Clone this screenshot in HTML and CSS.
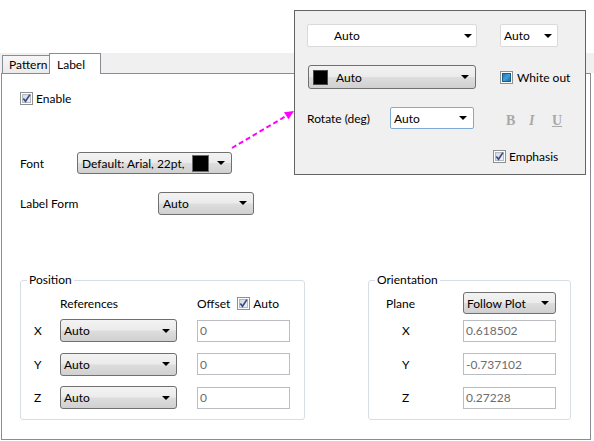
FILE: index.html
```html
<!DOCTYPE html>
<html>
<head>
<meta charset="utf-8">
<link rel="stylesheet" href="styles.css">
</head>
<body>
<svg class="defs" width="0" height="0">
  <defs>
    <linearGradient id="cbg" x1="0" y1="0" x2="1" y2="1">
      <stop offset="0" stop-color="#d2d6de"/>
      <stop offset="1" stop-color="#f4f5f7"/>
    </linearGradient>
    <linearGradient id="blueg" x1="0" y1="0" x2="1" y2="1">
      <stop offset="0" stop-color="#1f6fae"/>
      <stop offset="0.5" stop-color="#3ea0d8"/>
      <stop offset="1" stop-color="#1a679f"/>
    </linearGradient>
    <symbol id="cb" viewBox="0 0 13 13">
      <rect x="0.5" y="0.5" width="12" height="12" fill="#fff" stroke="#8e8f8f"/>
      <rect x="2.5" y="2.5" width="8" height="8" fill="url(#cbg)" stroke="#b4b9c1"/>
      <path d="M3.3 6.4 L5.5 9.3 L9.9 2.6" fill="none" stroke="#3a4d8a" stroke-width="1.7"/>
    </symbol>
    <symbol id="cbfill" viewBox="0 0 13 13">
      <rect x="0.5" y="0.5" width="12" height="12" fill="#fff" stroke="#8e8f8f"/>
      <rect x="2.5" y="2.5" width="8" height="8" fill="url(#blueg)" stroke="#1d5d8f"/>
    </symbol>
  </defs>
</svg>

<div class="window">
  <div class="tabstrip">
    <div class="tab">Pattern</div>
    <div class="tab active">Label</div>
  </div>

  <div class="panel">
    <div class="row enable-row">
      <svg class="chk"><use href="#cb"/></svg>
      <span>Enable</span>
    </div>

    <div class="row font-row">
      <span class="lbl font-lbl">Font</span>
      <div class="combo font-combo">
        <span>Default: Arial, 22pt,</span>
        <span class="swatch font-swatch"></span>
        <span class="arr"></span>
      </div>
    </div>

    <div class="row form-row">
      <span class="lbl form-lbl">Label Form</span>
      <div class="combo form-combo">
        <span>Auto</span>
        <span class="arr"></span>
      </div>
    </div>

    <div class="groups">
      <fieldset class="group pos">
        <legend>Position</legend>
        <div class="ginner pos-inner">
          <div class="grow head">
            <span class="xl"></span>
            <span class="refs">References</span>
            <span class="offset">Offset</span>
            <svg class="chk"><use href="#cb"/></svg>
            <span class="auto-lbl">Auto</span>
          </div>
          <div class="grow">
            <span class="xl">X</span>
            <div class="combo gcombo"><span>Auto</span><span class="arr"></span></div>
            <div class="tb pos-tb">0</div>
          </div>
          <div class="grow">
            <span class="xl">Y</span>
            <div class="combo gcombo"><span>Auto</span><span class="arr"></span></div>
            <div class="tb pos-tb">0</div>
          </div>
          <div class="grow">
            <span class="xl">Z</span>
            <div class="combo gcombo"><span>Auto</span><span class="arr"></span></div>
            <div class="tb pos-tb">0</div>
          </div>
        </div>
      </fieldset>

      <fieldset class="group orient">
        <legend>Orientation</legend>
        <div class="ginner orient-inner">
          <div class="grow head">
            <span class="ol">Plane</span>
            <div class="combo ocombo"><span>Follow Plot</span><span class="arr"></span></div>
          </div>
          <div class="grow">
            <span class="ol axis">X</span>
            <div class="tb">0.618502</div>
          </div>
          <div class="grow">
            <span class="ol axis">Y</span>
            <div class="tb">-0.737102</div>
          </div>
          <div class="grow">
            <span class="ol axis">Z</span>
            <div class="tb">0.27228</div>
          </div>
        </div>
      </fieldset>
    </div>
  </div>

  <svg class="pointer" width="594" height="441" viewBox="0 0 594 441">
    <line x1="232" y1="148" x2="287" y2="115.5" stroke="#ff00ff" stroke-width="2" stroke-dasharray="5 3"/>
    <polygon points="294,111 288.5,119.3 284,112.2" fill="#ff00ff"/>
  </svg>

  <div class="popup">
    <div class="prow p1">
      <div class="wcombo wc1"><span>Auto</span><span class="arr"></span></div>
      <div class="wcombo wc2"><span>Auto</span><span class="arr"></span></div>
    </div>
    <div class="prow p2">
      <div class="combo color-combo">
        <span class="swatch color-swatch"></span>
        <span class="cc-text">Auto</span>
        <span class="arr"></span>
      </div>
      <svg class="chk whiteout-chk"><use href="#cbfill"/></svg>
      <span class="whiteout">White out</span>
    </div>
    <div class="prow p3">
      <span class="rot-lbl">Rotate (deg)</span>
      <div class="wcombo rot-combo"><span>Auto</span><span class="arr"></span></div>
      <div class="fmts">
        <span class="fmt fb">B</span>
        <span class="fmt fi">I</span>
        <span class="fmt fu">U</span>
      </div>
    </div>
    <div class="prow p4">
      <svg class="chk"><use href="#cb"/></svg>
      <span class="emph">Emphasis</span>
    </div>
  </div>
</div>
</body>
</html>
```

FILE: styles.css
```css
html, body {
  margin: 0;
  padding: 0;
  background: #ffffff;
}

body {
  font-family: Lato, "Noto Sans", sans-serif;
  font-size: 12px;
  color: #000000;
}

.defs {
  position: absolute;
  width: 0;
  height: 0;
}

.window {
  position: relative;
  width: 594px;
  height: 441px;
  padding-top: 53px;
  box-sizing: border-box;
  overflow: hidden;
}

/* Tabs */
.tabstrip {
  height: 20px;
  background: #f0f0f0;
  display: flex;
  align-items: flex-end;
  padding-left: 2px;
}

.tab {
  box-sizing: border-box;
  height: 18px;
  width: 48px;
  border: 1px solid #898c95;
  border-bottom: none;
  background: linear-gradient(#f6f6f6, #ebebeb);
  display: flex;
  align-items: center;
  padding-left: 6px;
}

.tab.active {
  height: 21px;
  width: 52px;
  margin-left: -1px;
  margin-bottom: -1px;
  background: #ffffff;
  position: relative;
  z-index: 1;
  padding-left: 7px;
}

/* Panel */
.panel {
  margin-left: 1px;
  width: 590px;
  height: 367px;
  box-sizing: border-box;
  border: 1px solid #898c95;
  padding: 13px 0 0 18px;
  background: #ffffff;
}

.row {
  display: flex;
  align-items: center;
  height: 22px;
}

.chk {
  width: 13px;
  height: 13px;
  flex: none;
  display: block;
}

.enable-row .chk {
  margin-right: 3px;
}

.font-row {
  margin-top: 43px;
}

.font-lbl {
  width: 57px;
}

.form-row {
  margin-top: 18px;
}

.form-lbl {
  width: 138px;
}

/* Combo boxes */
.combo {
  display: flex;
  align-items: center;
  box-sizing: border-box;
  height: 22px;
  border: 1px solid #707070;
  border-radius: 3px;
  background: linear-gradient(#f3f3f3 0%, #ebebeb 48%, #dddddd 52%, #d0d0d0 100%);
  padding: 0 6px 0 4px;
  white-space: nowrap;
}

.arr {
  width: 0;
  height: 0;
  border-left: 4px solid transparent;
  border-right: 4px solid transparent;
  border-top: 4px solid #000000;
  margin-left: auto;
  flex: none;
}

.font-combo {
  width: 155px;
}

.swatch {
  display: block;
  box-sizing: border-box;
  background: #000000;
  flex: none;
}

.font-swatch {
  width: 17px;
  height: 17px;
  border: 1px solid #6b6b6b;
  margin-left: 8px;
}

.form-combo {
  width: 96px;
  height: 23px;
}

/* Group boxes */
.groups {
  display: flex;
  margin-top: 58px;
}

.group {
  margin: 0;
  padding: 0;
  border: 1px solid #d5dfe5;
  border-radius: 3px;
  min-width: 0;
  box-sizing: border-box;
}

.group legend {
  padding: 0 2px;
  margin-left: 6px;
  line-height: 16px;
}

.pos {
  width: 285px;
}

.orient {
  width: 203px;
  margin-left: 63px;
}

.ginner {
  padding: 4px 0 10px 13px;
}

.orient-inner {
  padding-left: 17px;
}

.grow {
  display: flex;
  align-items: center;
  height: 23px;
}

.grow.head {
  height: 22px;
}

.head + .grow {
  margin-top: 5px;
}

.grow + .grow + .grow {
  margin-top: 10.5px;
}

.xl {
  width: 26px;
  flex: none;
}

.refs {
  width: 137px;
  flex: none;
}

.offset {
  margin-right: 7px;
}

.auto-lbl {
  margin-left: 3px;
}

.gcombo {
  width: 117px;
  height: 23px;
  padding-left: 3px;
}

.tb {
  box-sizing: border-box;
  width: 93px;
  height: 22px;
  border: 1px solid #babdc2;
  background: #ffffff;
  color: #6d6d6d;
  padding-left: 2px;
  display: flex;
  align-items: center;
}

.pos-tb {
  margin-left: 20px;
}

.ol {
  width: 77px;
  flex: none;
}

.ol.axis {
  box-sizing: border-box;
  padding-left: 16px;
}

.ocombo {
  width: 93px;
  height: 22px;
  padding-left: 3px;
}

/* Pointer arrow */
.pointer {
  position: absolute;
  left: 0;
  top: 0;
  pointer-events: none;
  z-index: 2;
}

/* Popup */
.popup {
  position: absolute;
  left: 294px;
  top: 10px;
  width: 292px;
  height: 165px;
  box-sizing: border-box;
  border: 1px solid #646464;
  background: #f0f0f0;
  padding: 13px 0 0 12px;
  z-index: 3;
}

.prow {
  display: flex;
  align-items: center;
}

.wcombo {
  display: flex;
  align-items: center;
  box-sizing: border-box;
  height: 23px;
  background: #ffffff;
  border: 1px solid #dadada;
  border-radius: 2px;
}

.wc1 {
  width: 170px;
  padding: 0 4px 0 26px;
}

.wc2 {
  width: 58px;
  margin-left: 23px;
  padding: 0 5px 0 3px;
}

.p2 {
  margin-top: 18px;
}

.color-combo {
  width: 168px;
  height: 24px;
  margin-left: 1px;
}

.color-swatch {
  width: 15px;
  height: 15px;
  border: 1px solid #4a4a4a;
}

.cc-text {
  margin-left: 8px;
}

.whiteout-chk {
  margin-left: 24px;
}

.whiteout {
  margin-left: 4px;
}

.p3 {
  margin-top: 18px;
}

.rot-lbl {
  width: 83px;
  flex: none;
}

.rot-combo {
  width: 84px;
  height: 22px;
  border-color: #7eaad6;
  padding: 0 6px 0 3px;
}

.fmts {
  display: flex;
  margin-left: 32px;
  padding-top: 6px;
}

.fmt {
  width: 23px;
  font-family: "Liberation Serif", serif;
  font-weight: bold;
  font-size: 14px;
  color: #a9a9a9;
}

.fi {
  font-style: italic;
}

.fu {
  text-decoration: underline;
}

.p4 {
  margin-top: 20px;
  padding-left: 186px;
}

.emph {
  margin-left: 3px;
}
```
